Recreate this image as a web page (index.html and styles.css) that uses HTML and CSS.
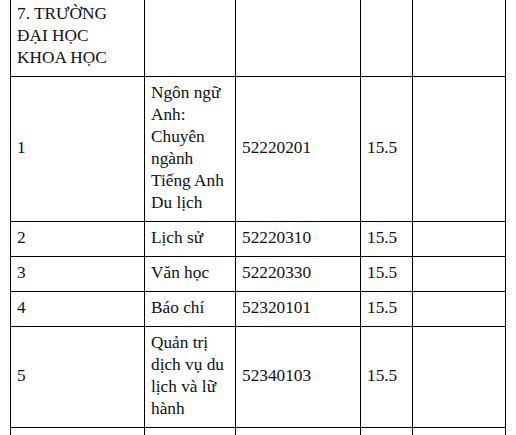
FILE: index.html
```html
<!DOCTYPE html>
<html>
<head>
<meta charset="utf-8">
<title>Điểm chuẩn</title>
<link rel="stylesheet" href="styles.css">
</head>
<body>
<div class="page">
  <div class="grid">
    <div class="cell"><span class="t">7. TRƯỜNG<br>ĐẠI HỌC<br>KHOA HỌC</span></div>
    <div class="cell"></div>
    <div class="cell"></div>
    <div class="cell"></div>
    <div class="cell"></div>

    <div class="cell"><span class="t">1</span></div>
    <div class="cell"><span class="t">Ngôn ngữ<br>Anh:<br>Chuyên<br>ngành<br>Tiếng Anh<br>Du lịch</span></div>
    <div class="cell"><span class="t">52220201</span></div>
    <div class="cell"><span class="t">15.5</span></div>
    <div class="cell"></div>

    <div class="cell"><span class="t">2</span></div>
    <div class="cell"><span class="t">Lịch sử</span></div>
    <div class="cell"><span class="t">52220310</span></div>
    <div class="cell"><span class="t">15.5</span></div>
    <div class="cell"></div>

    <div class="cell"><span class="t">3</span></div>
    <div class="cell"><span class="t">Văn học</span></div>
    <div class="cell"><span class="t">52220330</span></div>
    <div class="cell"><span class="t">15.5</span></div>
    <div class="cell"></div>

    <div class="cell"><span class="t">4</span></div>
    <div class="cell"><span class="t">Báo chí</span></div>
    <div class="cell"><span class="t">52320101</span></div>
    <div class="cell"><span class="t">15.5</span></div>
    <div class="cell"></div>

    <div class="cell"><span class="t">5</span></div>
    <div class="cell"><span class="t">Quản trị<br>dịch vụ du<br>lịch và lữ<br>hành</span></div>
    <div class="cell"><span class="t">52340103</span></div>
    <div class="cell"><span class="t">15.5</span></div>
    <div class="cell"></div>

    <div class="cell tail"></div>
    <div class="cell tail"></div>
    <div class="cell tail"></div>
    <div class="cell tail"></div>
    <div class="cell tail"></div>
  </div>
</div>
</body>
</html>
```

FILE: styles.css
```css
html, body {
  margin: 0;
  padding: 0;
  background: #ffffff;
}

.page {
  padding: 0 0 0 10px;
  margin-top: -3px;
}

.grid {
  display: grid;
  grid-template-columns: 134px 91px 125px 52px 93px;
  width: 496px;
  box-sizing: border-box;
  border-top: 1px solid #000000;
  border-left: 1px solid #000000;
  font-family: "Liberation Serif", serif;
  font-size: 17.3px;
  line-height: 22px;
  color: #111111;
}

.cell {
  display: flex;
  align-items: center;
  box-sizing: border-box;
  padding: 5px 6px 7px 6px;
  border-right: 1px solid #000000;
  border-bottom: 1px solid #000000;
  white-space: nowrap;
  overflow: hidden;
  min-height: 35px;
}

.t {
  display: block;
  font-family: "Liberation Serif", serif;
}

.tail {
  min-height: 40px;
}
```
